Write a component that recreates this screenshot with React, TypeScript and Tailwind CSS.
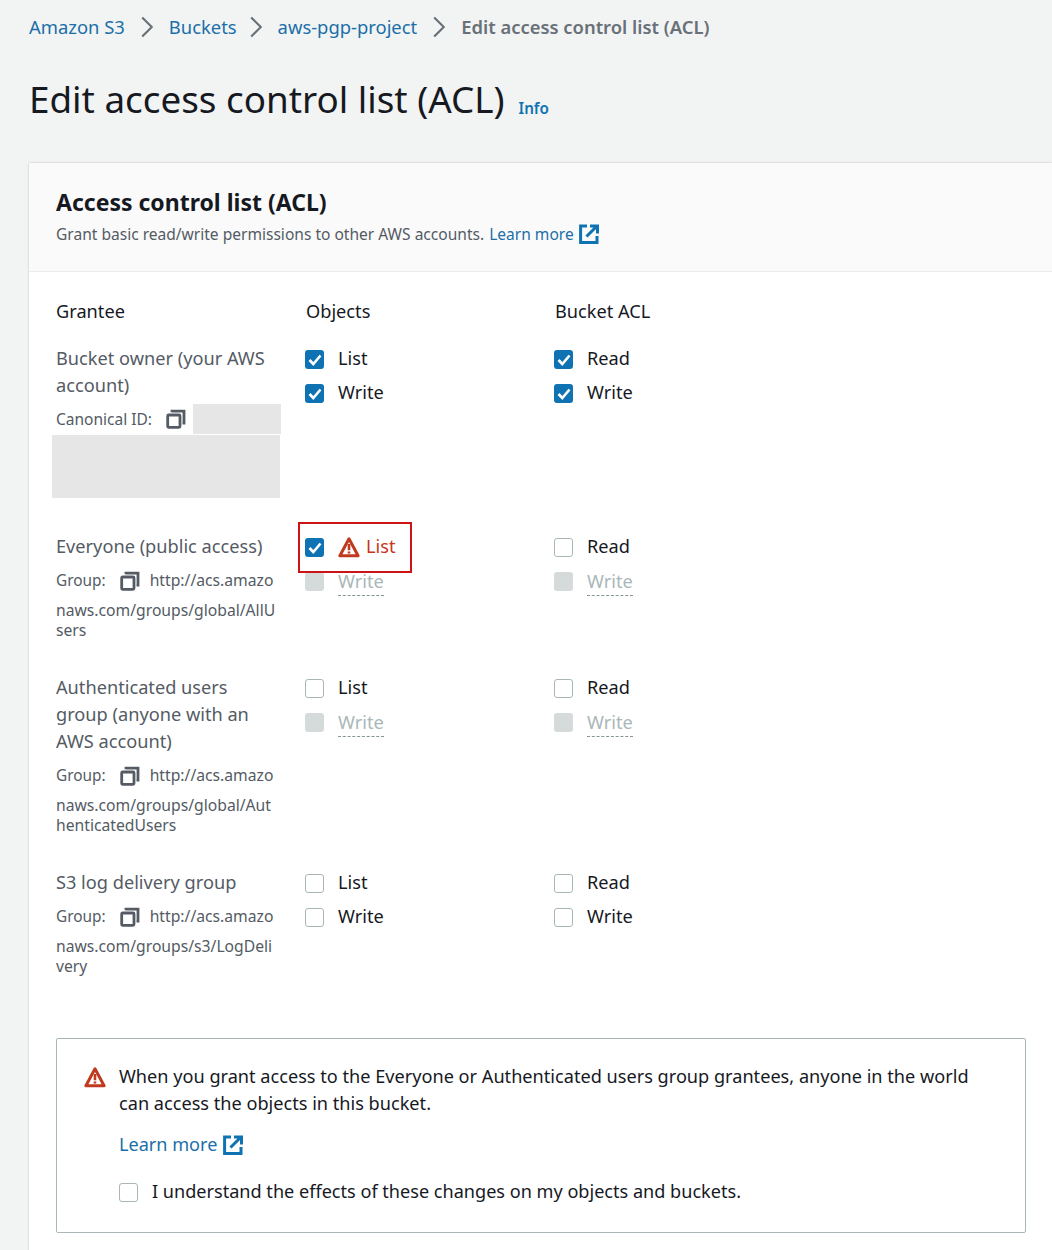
const font = 'font-["Noto_Sans",sans-serif]';

type BoxState = 'on' | 'off' | 'disabled';

function Chevron() {
  return (
    <svg width="12" height="22" viewBox="0 0 12 22" fill="none" stroke="#687078" strokeWidth="2.2" className="mx-[16px] shrink-0">
      <path d="M1.2 1.5 10.8 11 1.2 20.5" />
    </svg>
  );
}

function ExternalIcon() {
  return (
    <svg width="20" height="20" viewBox="0 0 20 20" fill="none" stroke="#0f73b3" strokeWidth="3" className="shrink-0">
      <path d="M8 2H1.6v16.4h16.4V12" />
      <path d="M7.5 12.5 17 3M11 2h7.5v7.5" />
    </svg>
  );
}

function CopyIcon() {
  return (
    <svg width="20" height="20" viewBox="0 0 20 20" fill="none" stroke="#545b64" strokeWidth="2.8" className="shrink-0">
      <rect x="1.7" y="6" width="12.3" height="12.3" rx="1" />
      <path d="M6 3.2V2.2h12v12h-1.5" />
    </svg>
  );
}

function WarnIcon() {
  return (
    <svg width="22" height="22" viewBox="0 0 22 22" fill="none" className="shrink-0">
      <path d="M11 2.8 1.9 19.8h18.2L11 2.8Z" stroke="#bf3a1e" strokeWidth="3" strokeLinejoin="round" />
      <path d="M11 8v6.2M11 15.4v2.2" stroke="#bf3a1e" strokeWidth="2.6" />
    </svg>
  );
}

function Box({ state }: { state: BoxState }) {
  if (state === 'on') {
    return (
      <span className="w-[19px] h-[19px] mt-[1px] rounded-[3px] bg-[#0f73b3] flex items-center justify-center shrink-0">
        <svg width="14" height="12" viewBox="0 0 14 12" fill="none" stroke="#fff" strokeWidth="2.6">
          <path d="M1.5 6 5.3 10 12.5 1.5" />
        </svg>
      </span>
    );
  }
  if (state === 'disabled') {
    return <span className="w-[19px] h-[19px] mt-[1px] rounded-[3px] bg-[#d5dbdb] shrink-0" />;
  }
  return <span className="w-[19px] h-[19px] mt-[1px] rounded-[3px] border border-[#aab7b8] bg-white shrink-0" />;
}

function Option({ label, state }: { label: string; state: BoxState }) {
  return (
    <div className="h-[34px] flex items-center gap-[14px]">
      <Box state={state} />
      {state === 'disabled' ? (
        <span className="text-[#aab7b8] border-b border-dashed border-[#879596] leading-[28px]">{label}</span>
      ) : (
        <span className="text-[#16191f]">{label}</span>
      )}
    </div>
  );
}

function GroupText({ label, lines }: { label: string; lines: string[] }) {
  return (
    <div className="text-[15.7px] text-[#545b64] mt-[6px]">
      <div className="h-[30px] mb-[4px] flex items-center whitespace-nowrap">
        <span className="text-[15.4px]">{label}</span>
        <span className="ml-[14px] mr-[10px]">
          <CopyIcon />
        </span>
        <span>{lines[0]}</span>
      </div>
      {lines.slice(1).map((line) => (
        <div key={line} className="leading-[20px] whitespace-nowrap">
          {line}
        </div>
      ))}
    </div>
  );
}

function Pair({ first, second, firstState, secondState }: { first: string; second: string; firstState: BoxState; secondState: BoxState }) {
  return (
    <div className="-mt-[3px]">
      <Option label={first} state={firstState} />
      <Option label={second} state={secondState} />
    </div>
  );
}

export default function App() {
  return (
    <div className={`${font} w-[1052px] h-[1250px] overflow-hidden bg-[#f2f3f3] text-[18.2px] text-[#16191f]`}>
      <nav className="pl-[29px] pt-[2px] h-[54px] flex items-center text-[#1b6fa8] pb-[3px] text-[18.4px]">
        <span>Amazon S3</span>
        <Chevron />
        <span className="-mr-[3px]">Buckets</span>
        <Chevron />
        <span>aws-pgp-project</span>
        <Chevron />
        <span className="text-[#687078] font-semibold">Edit access control list (ACL)</span>
      </nav>

      <div className="pl-[29px] h-[109px] flex items-start pt-[20px]">
        <h1 className="text-[36.8px] leading-[50px] text-[#16191f]">Edit access control list (ACL)</h1>
        <a className="ml-[14px] mt-[23px] text-[15.2px] font-semibold text-[#0f73b3]">Info</a>
      </div>

      <section className="ml-[29px] bg-white shadow-[0_0_2px_rgba(0,28,36,0.22)]">
        <header className="h-[109px] bg-[#fafafa] border-b border-[#eaeded] pl-[27px] pt-[23px]">
          <h2 className="text-[23px] leading-[32px] font-bold text-[#16191f]">Access control list (ACL)</h2>
          <p className="text-[15.55px] leading-[24px] text-[#545b64] mt-[4px] flex items-center gap-[5px]">
            <span>Grant basic read/write permissions to other AWS accounts.</span>
            <a className="text-[#1b6fa8]">Learn more</a>
            <ExternalIcon />
          </p>
        </header>

        <div className="pl-[27px] pr-[26px] pt-[25px]">
          <div className="grid grid-cols-[249px_249px_1fr] pb-[20px]">
            <div className="leading-[28px]">Grantee</div>
            <div className="leading-[28px] pl-px">Objects</div>
            <div className="leading-[28px] pl-px">Bucket ACL</div>
          </div>

          <div className="grid grid-cols-[249px_249px_1fr] h-[188px]">
            <div className="text-[#545b64]">
              <div className="leading-[27px] w-[225px]">Bucket owner (your AWS account)</div>
              <div className="text-[15.5px] h-[30px] flex items-center mt-[5px]">
                <span className="mt-[2px]">Canonical ID:</span>
                <span className="ml-[14px] mr-[7px]">
                  <CopyIcon />
                </span>
                <span className="w-[88px] h-[30px] bg-[#e6e6e6]" />
              </div>
              <div className="w-[228px] h-[63px] -ml-[4px] mt-[1px] bg-[#e6e6e6]" />
            </div>
            <Pair first="List" second="Write" firstState="on" secondState="on" />
            <Pair first="Read" second="Write" firstState="on" secondState="on" />
          </div>

          <div className="grid grid-cols-[249px_249px_1fr] h-[141px]">
            <div className="text-[#545b64]">
              <div className="leading-[27px]">Everyone (public access)</div>
              <GroupText label="Group:" lines={['http://acs.amazo', 'naws.com/groups/global/AllU', 'sers']} />
            </div>
            <div className="relative">
              <div className="-mt-[3px]">
                <div className="h-[34px] flex items-center gap-[14px]">
                  <Box state="on" />
                  <span className="flex items-center gap-[6px] text-[#c7361b]">
                    <WarnIcon />
                    List
                  </span>
                </div>
                <Option label="Write" state="disabled" />
              </div>
              <div className="absolute -left-[7px] -top-[11px] w-[114px] h-[51px] border-2 border-[#cc1417]" />
            </div>
            <Pair first="Read" second="Write" firstState="off" secondState="disabled" />
          </div>

          <div className="grid grid-cols-[249px_249px_1fr] h-[195px]">
            <div className="text-[#545b64]">
              <div className="leading-[27px] w-[225px]">Authenticated users group (anyone with an AWS account)</div>
              <GroupText label="Group:" lines={['http://acs.amazo', 'naws.com/groups/global/Aut', 'henticatedUsers']} />
            </div>
            <Pair first="List" second="Write" firstState="off" secondState="disabled" />
            <Pair first="Read" second="Write" firstState="off" secondState="disabled" />
          </div>

          <div className="grid grid-cols-[249px_249px_1fr] h-[169px]">
            <div className="text-[#545b64]">
              <div className="leading-[27px]">S3 log delivery group</div>
              <GroupText label="Group:" lines={['http://acs.amazo', 'naws.com/groups/s3/LogDeli', 'very']} />
            </div>
            <Pair first="List" second="Write" firstState="off" secondState="off" />
            <Pair first="Read" second="Write" firstState="off" secondState="off" />
          </div>

          <div className="h-[195px] border border-[#aab7b8] rounded-[2px] pl-[27px] pt-[24px] flex items-start gap-[13px] bg-white text-[18.1px]">
            <span className="mt-[3px]">
              <WarnIcon />
            </span>
            <div>
              <p className="leading-[27px] w-[870px] text-[18.15px]">
                When you grant access to the Everyone or Authenticated users group grantees, anyone in the world can access the objects in this bucket.
              </p>
              <a className="mt-[14px] flex items-center gap-[6px] text-[#1b6fa8] leading-[27px]">
                Learn more
                <ExternalIcon />
              </a>
              <div className="mt-[20px] h-[27px] flex items-center gap-[14px]">
                <Box state="off" />
                <span>I understand the effects of these changes on my objects and buckets.</span>
              </div>
            </div>
          </div>
          <div className="h-[40px]" />
        </div>
      </section>
    </div>
  );
}
